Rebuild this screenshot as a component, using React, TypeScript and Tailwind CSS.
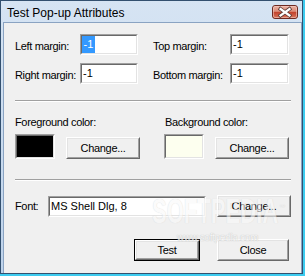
import React from "react";

const lbl = "text-[11px] leading-[13px] tracking-[-0.35px] text-black whitespace-nowrap";

function Field({
  outer,
  inner,
  children,
}: {
  outer: string;
  inner: string;
  children?: React.ReactNode;
}) {
  return (
    <div className={`flex shrink-0 border border-t-[#a0a0a0] border-l-[#a0a0a0] border-r-white border-b-white ${outer}`}>
      <div className={`flex-1 flex items-start border border-t-[#696969] border-l-[#696969] border-r-[#e3e3e3] border-b-[#e3e3e3] ${inner}`}>
        {children}
      </div>
    </div>
  );
}

function Btn({ cls, label, isDefault }: { cls: string; label: string; isDefault?: boolean }) {
  const body = (
    <div className="flex-1 flex border border-t-white border-l-white border-r-[#696969] border-b-[#696969]">
      <div className="flex-1 flex items-center justify-center border border-t-[#e3e3e3] border-l-[#e3e3e3] border-r-[#a0a0a0] border-b-[#a0a0a0] bg-[#f0f0f0]">
        <span className="text-[11px] leading-[13px] tracking-[-0.3px] text-black">{label}</span>
      </div>
    </div>
  );
  if (isDefault) {
    return <div className={`flex shrink-0 border border-black ${cls}`}>{body}</div>;
  }
  return <div className={`flex shrink-0 ${cls}`}>{body}</div>;
}

function CloseBtn() {
  return (
    <svg width="26" height="14" viewBox="0 0 26 14" className="mt-[4px] shrink-0">
      <defs>
        <linearGradient id="cg" x1="0" y1="0" x2="0" y2="1">
          <stop offset="0" stopColor="#ecb4a6" />
          <stop offset="0.45" stopColor="#db8c79" />
          <stop offset="0.52" stopColor="#c3432d" />
          <stop offset="1" stopColor="#d9765d" />
        </linearGradient>
      </defs>
      <rect x="0.5" y="0.5" width="25" height="13" rx="2.5" fill="url(#cg)" stroke="#6e2a22" />
      <rect x="1.5" y="1.5" width="23" height="11" rx="1.5" fill="none" stroke="#f6d2c8" strokeOpacity="0.55" />
      <path d="M8.5 4 L17.5 10.5 M17.5 4 L8.5 10.5" stroke="#5b3a36" strokeWidth="3.8" strokeLinecap="square" />
      <path d="M8.5 4 L17.5 10.5 M17.5 4 L8.5 10.5" stroke="#ffffff" strokeWidth="2.2" strokeLinecap="square" />
    </svg>
  );
}

export default function App() {
  return (
    <div className="w-[305px] h-[276px] flex border-r-2 border-b-2 border-[#3ccbef] font-['Liberation_Sans',Arial,sans-serif] text-black">
      <div className="flex-1 flex flex-col border border-[#33506f] bg-gradient-to-b from-[#d6e4f3] to-[#bed3eb] pl-[2px]">
        <div className="h-[21px] shrink-0 flex items-start justify-between pl-[4px] pr-[4px]">
          <span className="pt-[4px] text-[12px] leading-[16px] text-black whitespace-nowrap">Test Pop-up Attributes</span>
          <CloseBtn />
        </div>
        <div className="relative flex-1 flex flex-col border-l border-t border-r border-[#8aa3c2] bg-[#f0f0f0] pl-[11px] pt-[11px]">
          {/* margins */}
          <div className="flex items-start h-[21px]">
            <span className={`${lbl} w-[65px] pt-[6px]`}>Left margin:</span>
            <Field outer="w-[58px] h-[21px]" inner="bg-white">
              <span className="text-[11px] leading-[17px] bg-[#3399ff] text-white px-[1.5px]">-1</span>
            </Field>
            <span className={`${lbl} w-[77px] ml-[15px] pt-[6px]`}>Top margin:</span>
            <Field outer="w-[59px] h-[21px]" inner="bg-white">
              <span className="text-[11px] leading-[17px] pl-[1px]">-1</span>
            </Field>
          </div>
          <div className="flex items-start h-[21px] mt-[8px]">
            <span className={`${lbl} w-[65px] pt-[6px]`}>Right margin:</span>
            <Field outer="w-[58px] h-[21px]" inner="bg-white">
              <span className="text-[11px] leading-[17px] pl-[1px]">-1</span>
            </Field>
            <span className={`${lbl} w-[77px] ml-[15px] pt-[6px]`}>Bottom margin:</span>
            <Field outer="w-[59px] h-[21px]" inner="bg-white">
              <span className="text-[11px] leading-[17px] pl-[1px]">-1</span>
            </Field>
          </div>

          <div className="mt-[16px] w-[276px] h-[2px] border-t border-t-[#a0a0a0] border-b border-b-white" />

          {/* colors */}
          <div className="mt-[14px] flex">
            <div className="w-[149px] flex flex-col">
              <span className={lbl}>Foreground color:</span>
              <div className="mt-[5px] flex items-end">
                <Field outer="w-[40px] h-[25px]" inner="bg-black" />
                <Btn cls="ml-[11px] w-[74px] h-[22px]" label="Change..." />
              </div>
            </div>
            <div className="flex flex-col">
              <span className={`${lbl} pl-[1px]`}>Background color:</span>
              <div className="mt-[5px] flex items-end">
                <Field outer="w-[40px] h-[25px]" inner="bg-[#fdffef]" />
                <Btn cls="ml-[11px] w-[74px] h-[22px]" label="Change..." />
              </div>
            </div>
          </div>

          <div className="mt-[20px] w-[276px] h-[2px] border-t border-t-[#a0a0a0] border-b border-b-white" />

          {/* font */}
          <div className="mt-[14px] flex items-end h-[22px]">
            <span className={`${lbl} w-[33px] self-center`}>Font:</span>
            <Field outer="w-[158px] h-[21px]" inner="bg-white">
              <span className="text-[11px] leading-[17px] pl-[1px] whitespace-nowrap">MS Shell Dlg, 8</span>
            </Field>
            <Btn cls="ml-[11px] w-[74px] h-[22px]" label="Change..." />
          </div>

          {/* buttons */}
          <div className="mt-[22px] flex w-[276px] justify-end pr-[2px]">
            <Btn cls="w-[66px] h-[22px]" label="Test" isDefault />
            <Btn cls="ml-[17px] w-[72px] h-[22px]" label="Close" />
          </div>

          {/* watermark overlay */}
          <div className="absolute left-[148px] top-[170px] pointer-events-none select-none text-[35px] leading-none font-bold text-[#f9f9f9] [text-shadow:0_0_1px_#c4c4c4] scale-x-[0.63] origin-left whitespace-nowrap opacity-60">
            SOFTPEDIA
          </div>
          <div className="absolute left-[275px] top-[181px] pointer-events-none select-none text-[6px] leading-none text-[#f7f7f7] [text-shadow:0_0_1px_#b5b5b5] opacity-70">
            ™
          </div>
          <div className="absolute left-[173px] top-[210px] pointer-events-none select-none text-[10px] leading-none tracking-[-0.3px] text-[#f7f7f7] [text-shadow:0_0_1px_#a5a5a5] opacity-80 whitespace-nowrap">
            www.softpedia.com
          </div>
        </div>
      </div>
    </div>
  );
}
